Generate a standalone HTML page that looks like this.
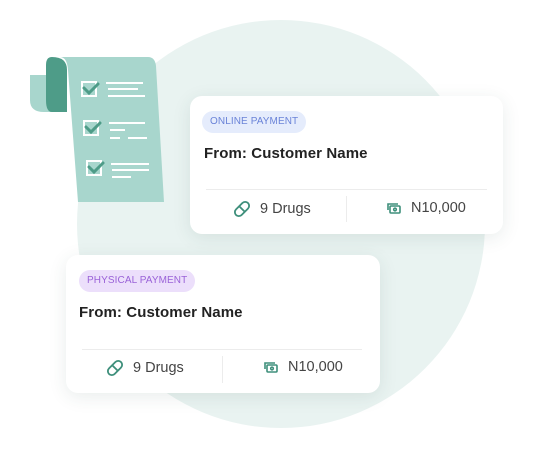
<!DOCTYPE html>
<html><head><style>
body{margin:0;width:549px;height:454px;background:#fff;position:relative;overflow:hidden;font-family:"Liberation Sans",sans-serif}
.circle{position:absolute;left:77px;top:20px;width:408px;height:408px;border-radius:50%;background:#e9f3f1}
.card{position:absolute;background:#fff;border-radius:12px;box-shadow:0 4px 18px rgba(40,80,70,.10)}
.badge{position:absolute;height:22px;line-height:22px;border-radius:11px;font-size:10px;padding:0 8px;letter-spacing:.1px}
.title{position:absolute;font-size:15px;color:#222;font-weight:bold;letter-spacing:.1px}
.hr{position:absolute;height:1px;background:#ececec}
.vr{position:absolute;width:1px;background:#ececec}
.it{position:absolute;font-size:14.5px;color:#444;display:flex;align-items:center;gap:9px}
</style></head><body>
<div class="circle"></div>
<svg style="position:absolute;left:0;top:0" width="549" height="454">
<path d="M30 75 H55 V112 H44 Q30 112 30 100 Z" fill="#a8d6cd"/>
<path d="M52 57 Q67 57 67 70 V112 H52 Q46 112 46 100 V65 Q46 57 52 57Z" fill="#4e9c88"/>
<path d="M60 57 H148 Q155 57 156 66 L164 202 H78 L68 70 Q67 57 60 57Z" fill="#a8d6cd"/>
<g stroke="#fff" stroke-width="2" fill="none">
<rect x="82" y="82" width="14" height="14"/><rect x="84" y="121" width="14" height="14"/><rect x="87" y="161" width="14" height="14"/>
<path d="M106 83H143M108 89H138M108 96H145"/>
<path d="M109 123H145M110 130H125M110 138H120M128 138H147"/>
<path d="M111 164H149M112 170H149M112 177H131"/>
</g>
<g stroke="#4e9c88" stroke-width="3" fill="none" stroke-linecap="round">
<path d="M84 88 L89 93 L98 84"/><path d="M86 127 L91 132 L100 123"/><path d="M89 167 L94 172 L103 163"/>
</g>
</svg>

<div class="card" style="left:190px;top:96px;width:313px;height:138px">
<div class="badge" style="left:12px;top:15px;background:#e5ecfc;color:#6a83d8">ONLINE PAYMENT</div>
<div class="title" style="left:14px;top:49px">From: Customer Name</div>
<div class="hr" style="left:16px;right:16px;top:93px"></div>
<div class="vr" style="left:156px;top:100px;height:26px"></div>
<div class="it" style="left:43px;top:104px"><svg width="18" height="18" viewBox="0 0 16 16"><g transform="rotate(45 8 8)"><rect x="4.5" y="0.5" width="7" height="15" rx="3.5" fill="none" stroke="#3e8f7b" stroke-width="1.6"/><path d="M4.5 8H11.5" stroke="#3e8f7b" stroke-width="1.6"/></g></svg>9 Drugs</div>
<div class="it" style="left:196px;top:104px"><svg width="16" height="16" viewBox="0 0 16 16" fill="none" stroke="#3e8f7b" stroke-width="1.6"><path d="M2 10V4H12"/><rect x="4" y="6" width="10" height="7" rx="1"/><circle cx="9" cy="9.5" r="1.3"/></svg>N10,000</div>
</div>

<div class="card" style="left:66px;top:255px;width:314px;height:138px">
<div class="badge" style="left:13px;top:15px;background:#ecdffb;color:#9a62d8">PHYSICAL PAYMENT</div>
<div class="title" style="left:13px;top:49px">From: Customer Name</div>
<div class="hr" style="left:16px;right:18px;top:94px"></div>
<div class="vr" style="left:156px;top:101px;height:27px"></div>
<div class="it" style="left:40px;top:104px"><svg width="18" height="18" viewBox="0 0 16 16"><g transform="rotate(45 8 8)"><rect x="4.5" y="0.5" width="7" height="15" rx="3.5" fill="none" stroke="#3e8f7b" stroke-width="1.6"/><path d="M4.5 8H11.5" stroke="#3e8f7b" stroke-width="1.6"/></g></svg>9 Drugs</div>
<div class="it" style="left:197px;top:104px"><svg width="16" height="16" viewBox="0 0 16 16" fill="none" stroke="#3e8f7b" stroke-width="1.6"><path d="M2 10V4H12"/><rect x="4" y="6" width="10" height="7" rx="1"/><circle cx="9" cy="9.5" r="1.3"/></svg>N10,000</div>
</div>
</body></html>
